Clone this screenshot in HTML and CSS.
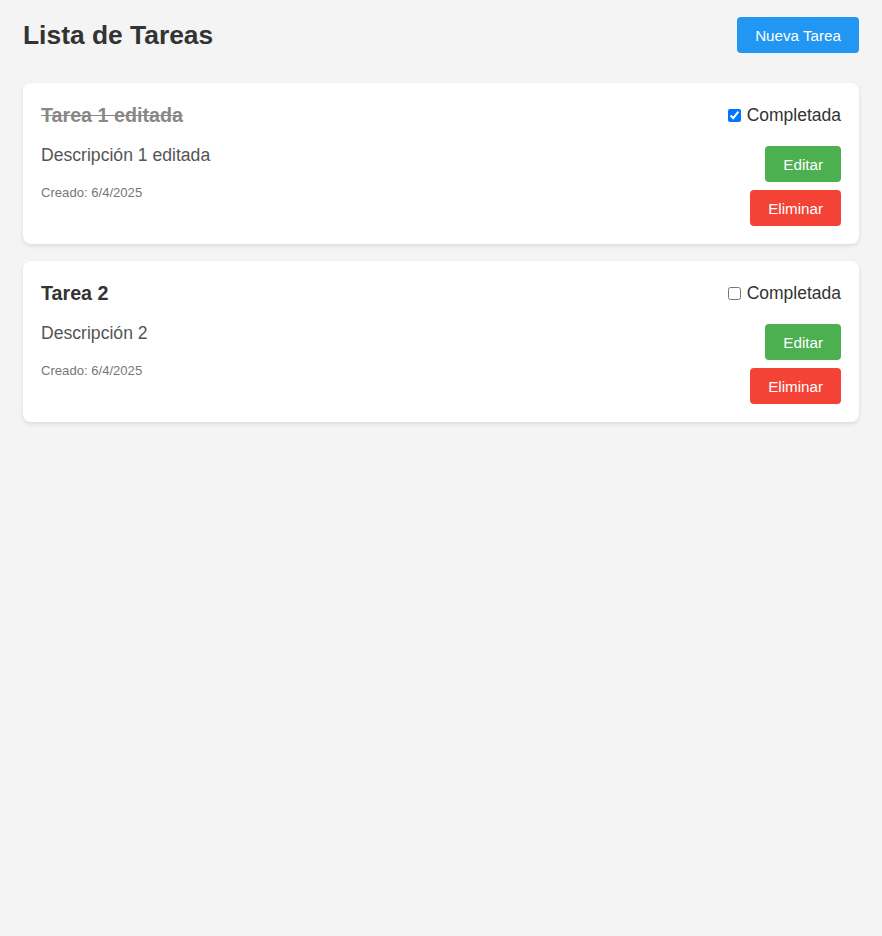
FILE: index.html
```html
<!DOCTYPE html>
<html lang="es">
<head>
<meta charset="utf-8">
<title>Lista de Tareas</title>
<link rel="stylesheet" href="styles.css">
</head>
<body>
<div class="app">
  <header class="top">
    <h1 class="title">Lista de Tareas</h1>
    <button class="btn btn-blue">Nueva Tarea</button>
  </header>
  <div class="list">
    <div class="card">
      <div class="card-head">
        <h3 class="task-title done">Tarea 1 editada</h3>
        <label class="check"><input type="checkbox" checked> Completada</label>
      </div>
      <div class="card-body">
        <div class="info">
          <p class="desc">Descripción 1 editada</p>
          <p class="date">Creado: 6/4/2025</p>
        </div>
        <div class="actions">
          <button class="btn btn-green">Editar</button>
          <button class="btn btn-red">Eliminar</button>
        </div>
      </div>
    </div>
    <div class="card">
      <div class="card-head">
        <h3 class="task-title">Tarea 2</h3>
        <label class="check"><input type="checkbox"> Completada</label>
      </div>
      <div class="card-body">
        <div class="info">
          <p class="desc">Descripción 2</p>
          <p class="date">Creado: 6/4/2025</p>
        </div>
        <div class="actions">
          <button class="btn btn-green">Editar</button>
          <button class="btn btn-red">Eliminar</button>
        </div>
      </div>
    </div>
  </div>
</div>
</body>
</html>
```
FILE: styles.css
```css
html, body {
  margin: 0;
  padding: 0;
  background: #f4f4f4;
  font-family: "Liberation Sans", Arial, sans-serif;
  color: #333;
}
.app {
  padding: 17px 23px;
}
.top {
  display: flex;
  justify-content: space-between;
  align-items: center;
  height: 36px;
  margin-bottom: 30px;
}
.title {
  margin: 0;
  font-size: 26.4px;
  font-weight: bold;
  color: #333;
}
.btn {
  border: none;
  border-radius: 4px;
  color: #fff;
  font-family: "Liberation Sans", Arial, sans-serif;
  font-size: 15.2px;
  height: 36px;
  padding: 0 18px;
  cursor: pointer;
}
.btn-blue { background: #2196f3; }
.btn-green { background: #4caf50; }
.btn-red { background: #f44336; }
.list {
  display: flex;
  flex-direction: column;
  gap: 17px;
}
.card {
  background: #fff;
  border-radius: 8px;
  box-shadow: 0 2px 4px rgba(0,0,0,0.1);
  padding: 18px;
}
.card-head {
  display: flex;
  justify-content: space-between;
  align-items: center;
  height: 28px;
  margin-bottom: 17px;
}
.task-title {
  margin: 0;
  font-size: 19.7px;
  font-weight: bold;
  color: #333;
}
.task-title.done {
  text-decoration: line-through;
  color: #888;
}
.check {
  display: flex;
  align-items: center;
  font-size: 17.5px;
  color: #333;
}
.check input {
  width: 13px;
  height: 13px;
  margin: 0 6px 0 0;
}
.card-body {
  display: flex;
  justify-content: space-between;
  align-items: flex-start;
}
.desc {
  margin: -1px 0 0;
  font-size: 17.6px;
  line-height: 20px;
  color: #555;
}
.date {
  margin: 20px 0 0;
  font-size: 13.1px;
  line-height: 15px;
  color: #777;
}
.actions {
  display: flex;
  flex-direction: column;
  align-items: flex-end;
  gap: 8px;
}
```
